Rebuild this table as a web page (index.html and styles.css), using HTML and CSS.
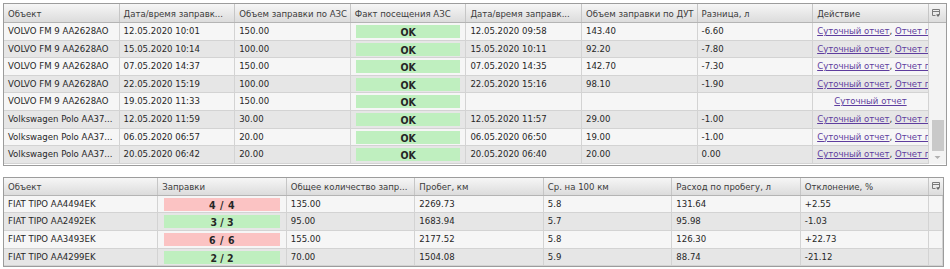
FILE: index.html
```html
<!DOCTYPE html>
<html lang="ru">
<head>
<meta charset="utf-8">
<title>Заправки</title>
<link rel="stylesheet" href="styles.css">
</head>
<body>
<div class="panel panel-top">
  <div class="hdr cols-top">
    <div class="hc">Объект</div>
    <div class="hc">Дата/время заправк...</div>
    <div class="hc">Объем заправки по АЗС</div>
    <div class="hc">Факт посещения АЗС</div>
    <div class="hc">Дата/время заправк...</div>
    <div class="hc">Объем заправки по ДУТ</div>
    <div class="hc">Разница, л</div>
    <div class="hc">Действие</div>
    <div class="hc hc-icon"><svg width="10" height="10" viewBox="0 0 10 10"><path d="M1.5 1.5h7v5h-2M1.5 1.5v6h3M1.5 3.5h7" fill="none" stroke="#7a7a7a" stroke-width="1"/><path d="M5 6.5h4l-2 2.5z" fill="#6a6a6a"/></svg></div>
  </div>
  <div class="body">
    <div class="rows">
      <div class="row cols-top-body odd"><div class="c">VOLVO FM 9 AA2628AO</div><div class="c">12.05.2020 10:01</div><div class="c">150.00</div><div class="c cb"><span class="badge ok">OK</span></div><div class="c">12.05.2020 09:58</div><div class="c">143.40</div><div class="c">-6.60</div><div class="c act"><a href="#">Суточный отчет</a>, <a href="#">Отчет по заправкам</a></div></div>
      <div class="row cols-top-body even"><div class="c">VOLVO FM 9 AA2628AO</div><div class="c">15.05.2020 10:14</div><div class="c">100.00</div><div class="c cb"><span class="badge ok">OK</span></div><div class="c">15.05.2020 10:11</div><div class="c">92.20</div><div class="c">-7.80</div><div class="c act"><a href="#">Суточный отчет</a>, <a href="#">Отчет по заправкам</a></div></div>
      <div class="row cols-top-body odd"><div class="c">VOLVO FM 9 AA2628AO</div><div class="c">07.05.2020 14:37</div><div class="c">150.00</div><div class="c cb"><span class="badge ok">OK</span></div><div class="c">07.05.2020 14:35</div><div class="c">142.70</div><div class="c">-7.30</div><div class="c act"><a href="#">Суточный отчет</a>, <a href="#">Отчет по заправкам</a></div></div>
      <div class="row cols-top-body even"><div class="c">VOLVO FM 9 AA2628AO</div><div class="c">22.05.2020 15:19</div><div class="c">100.00</div><div class="c cb"><span class="badge ok">OK</span></div><div class="c">22.05.2020 15:16</div><div class="c">98.10</div><div class="c">-1.90</div><div class="c act"><a href="#">Суточный отчет</a>, <a href="#">Отчет по заправкам</a></div></div>
      <div class="row cols-top-body odd"><div class="c">VOLVO FM 9 AA2628AO</div><div class="c">19.05.2020 11:33</div><div class="c">150.00</div><div class="c cb"><span class="badge ok">OK</span></div><div class="c"></div><div class="c"></div><div class="c"></div><div class="c act"><a href="#">Суточный отчет</a></div></div>
      <div class="row cols-top-body even"><div class="c">Volkswagen Polo AA37...</div><div class="c">12.05.2020 11:59</div><div class="c">30.00</div><div class="c cb"><span class="badge ok">OK</span></div><div class="c">12.05.2020 11:57</div><div class="c">29.00</div><div class="c">-1.00</div><div class="c act"><a href="#">Суточный отчет</a>, <a href="#">Отчет по заправкам</a></div></div>
      <div class="row cols-top-body odd"><div class="c">Volkswagen Polo AA37...</div><div class="c">06.05.2020 06:57</div><div class="c">20.00</div><div class="c cb"><span class="badge ok">OK</span></div><div class="c">06.05.2020 06:50</div><div class="c">19.00</div><div class="c">-1.00</div><div class="c act"><a href="#">Суточный отчет</a>, <a href="#">Отчет по заправкам</a></div></div>
      <div class="row cols-top-body even"><div class="c">Volkswagen Polo AA37...</div><div class="c">20.05.2020 06:42</div><div class="c">20.00</div><div class="c cb"><span class="badge ok">OK</span></div><div class="c">20.05.2020 06:40</div><div class="c">20.00</div><div class="c">0.00</div><div class="c act"><a href="#">Суточный отчет</a>, <a href="#">Отчет по заправкам</a></div></div>
    </div>
    <div class="scroll">
      <div class="thumb"></div>
      <div class="arrow"><svg width="7" height="5" viewBox="0 0 7 5"><path d="M0.5 1h6l-3 3z" fill="#b0b0b0"/></svg></div>
    </div>
  </div>
</div>

<div class="panel panel-bottom">
  <div class="hdr hdr-bottom cols-bottom">
    <div class="hc">Объект</div>
    <div class="hc">Заправки</div>
    <div class="hc">Общее количество запр...</div>
    <div class="hc">Пробег, км</div>
    <div class="hc">Ср. на 100 км</div>
    <div class="hc">Расход по пробегу, л</div>
    <div class="hc">Отклонение, %</div>
    <div class="hc hc-icon"><svg width="10" height="10" viewBox="0 0 10 10"><path d="M1.5 1.5h7v5h-2M1.5 1.5v6h3M1.5 3.5h7" fill="none" stroke="#7a7a7a" stroke-width="1"/><path d="M5 6.5h4l-2 2.5z" fill="#6a6a6a"/></svg></div>
  </div>
  <div class="row cols-bottom odd"><div class="c">FIAT TIPO AA4494EK</div><div class="c cb"><span class="badge bad">4 / 4</span></div><div class="c">135.00</div><div class="c">2269.73</div><div class="c">5.8</div><div class="c">131.64</div><div class="c">+2.55</div><div class="c"></div></div>
  <div class="row cols-bottom even"><div class="c">FIAT TIPO AA2492EK</div><div class="c cb"><span class="badge ok">3 / 3</span></div><div class="c">95.00</div><div class="c">1683.94</div><div class="c">5.7</div><div class="c">95.98</div><div class="c">-1.03</div><div class="c"></div></div>
  <div class="row cols-bottom odd"><div class="c">FIAT TIPO AA3493EK</div><div class="c cb"><span class="badge bad">6 / 6</span></div><div class="c">155.00</div><div class="c">2177.52</div><div class="c">5.8</div><div class="c">126.30</div><div class="c">+22.73</div><div class="c"></div></div>
  <div class="row cols-bottom even"><div class="c">FIAT TIPO AA4299EK</div><div class="c cb"><span class="badge ok">2 / 2</span></div><div class="c">70.00</div><div class="c">1504.08</div><div class="c">5.9</div><div class="c">88.74</div><div class="c">-21.12</div><div class="c"></div></div>
</div>
</body>
</html>
```

FILE: styles.css
```css
* { box-sizing: border-box; }

body {
  margin: 0;
  padding: 3px;
  background: #ffffff;
  font-family: "DejaVu Sans Condensed", "DejaVu Sans", sans-serif;
  font-stretch: condensed;
  font-size: 9.5px;
  color: #262626;
}

.panel {
  border: 1px solid #9c9c9c;
  background: #ffffff;
}

.panel-top {
  width: 944px;
}

.panel-bottom {
  width: 941px;
  margin-top: 11px;
}

.cols-top {
  display: grid;
  grid-template-columns: repeat(8, 115.6px) 1fr;
}

.cols-top-body {
  display: grid;
  grid-template-columns: repeat(8, 115.6px);
}

.cols-bottom {
  display: grid;
  grid-template-columns: 154.3px repeat(6, 128.5px) 1fr;
}

.hdr {
  height: 19px;
  background: linear-gradient(#f6f6f6, #dcdcdc);
  border-bottom: 1px solid #b4b4b4;
}

.hdr-bottom {
  height: 18px;
}

.hc {
  padding: 0 4px;
  border-right: 1px solid #c6c6c6;
  color: #3c3c3c;
  white-space: nowrap;
  overflow: hidden;
  display: flex;
  align-items: center;
}

.hc-icon {
  border-right: none;
  padding: 0 0 0 2px;
}

.body {
  display: flex;
  padding-bottom: 1px;
}

.rows {
  flex: none;
}

.row {
  height: 17.6px;
}

.odd { background: #f6f6f6; }
.even { background: #e6e6e6; }

.c {
  padding: 0 4px;
  border-right: 1px solid #d3d3d3;
  border-bottom: 1px solid #d3d3d3;
  white-space: nowrap;
  overflow: hidden;
  line-height: 16.6px;
}

.cb {
  display: flex;
  align-items: flex-start;
}

.act {
  text-align: center;
  color: #333;
}

.act a {
  color: #5e3d9e;
  text-decoration: underline;
}

.badge {
  flex: 1;
  height: 13px;
  margin: 2px 1.6px 0;
  line-height: 15px;
  text-align: center;
  font-size: 10.5px;
  font-weight: bold;
  color: #262626;
}

.badge.ok { background: #bfefbf; }
.badge.bad { background: #fbc3c3; letter-spacing: 0.6px; }

.scroll {
  width: 17px;
  background: #f3f3f3;
  display: flex;
  flex-direction: column;
  align-items: center;
  padding-left: 1px;
}

.thumb {
  margin-top: auto;
  width: 12px;
  height: 31px;
  background: #c9c9c9;
}

.arrow {
  height: 13px;
  display: flex;
  align-items: center;
  justify-content: center;
}
```
